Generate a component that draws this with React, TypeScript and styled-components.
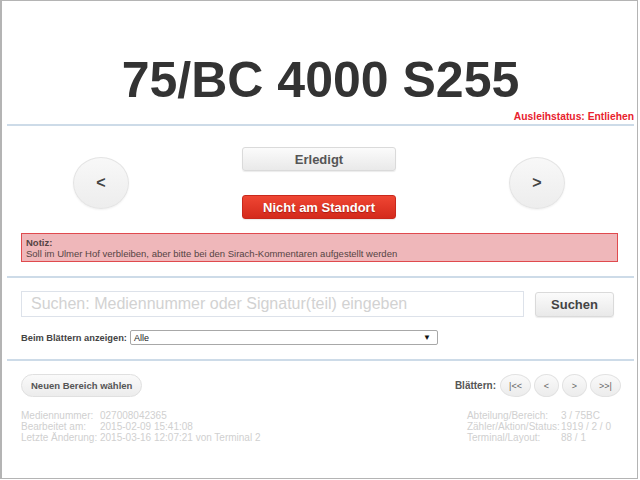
import styled, { createGlobalStyle } from "styled-components";

const GlobalStyle = createGlobalStyle`
  html, body {
    margin: 0;
    padding: 0;
    background: #ffffff;
  }
  body {
    font-family: "Liberation Sans", Arial, sans-serif;
    color: #333;
  }
`;

const Frame = styled.div`
  box-sizing: border-box;
  width: 638px;
  height: 479px;
  border: 1px solid #b4b4b4;
  border-left-width: 2px;
  padding: 0 3px 0 5px;
  overflow: hidden;
`;

const Title = styled.h1`
  margin: 54px 0 0;
  font-size: 50px;
  line-height: 50px;
  font-weight: bold;
  text-align: center;
  color: #333;
`;

const Status = styled.div`
  margin-top: 5px;
  text-align: right;
  font-size: 10.3px;
  line-height: 13px;
  font-weight: bold;
  color: #e8222e;
`;

const Rule = styled.hr<{ $gap: number }>`
  margin: ${(p) => p.$gap}px 0 0;
  border: 0;
  height: 2px;
  background: #cddbe8;
`;

const Section = styled.div<{ $right?: number }>`
  padding: 0 ${(p) => p.$right ?? 16}px 0 13px;
`;

const ActionRow = styled.div`
  margin-top: 21px;
  display: flex;
  align-items: center;
  justify-content: center;
  gap: 113px;
`;

const RoundNav = styled.button`
  width: 56px;
  height: 52px;
  border-radius: 50%;
  border: 1px solid #e4e4e4;
  background: linear-gradient(#f8f8f8, #ededed);
  box-shadow: 0 1px 2px rgba(0, 0, 0, 0.06);
  font-family: "Liberation Sans", Arial, sans-serif;
  font-size: 16px;
  font-weight: bold;
  color: #444;
  padding: 0;
`;

const ActionColumn = styled.div`
  display: flex;
  flex-direction: column;
  gap: 24px;
`;

const Button = styled.button<{ $danger?: boolean }>`
  width: 154px;
  height: 24px;
  border-radius: 3px;
  font-family: "Liberation Sans", Arial, sans-serif;
  font-size: 13px;
  font-weight: bold;
  padding: 0;
  border: 1px solid ${(p) => (p.$danger ? "#c8281c" : "#dadada")};
  background: ${(p) =>
    p.$danger
      ? "linear-gradient(#ef4633, #d42a1c)"
      : "linear-gradient(#fbfbfb, #e9e9e9)"};
  color: ${(p) => (p.$danger ? "#fff" : "#555")};
  text-shadow: ${(p) => (p.$danger ? "0 1px 1px rgba(120,0,0,0.5)" : "none")};
  box-shadow: 0 1px 1px rgba(0, 0, 0, 0.08);
`;

const Note = styled.div`
  margin-top: 14px;
  margin-left: 1px;
  box-sizing: border-box;
  height: 29px;
  padding: 3px 4px;
  background: #efb7ba;
  border: 1px solid #e04a4e;
  font-size: 9.5px;
  line-height: 11px;
  color: #554444;
`;

const NoteLabel = styled.div`
  font-weight: bold;
`;

const SearchRow = styled.div`
  margin-top: 13px;
  display: flex;
  align-items: center;
  gap: 11px;
  padding-left: 1px;
`;

const SearchInput = styled.input`
  box-sizing: border-box;
  width: 503px;
  height: 26px;
  border: 1px solid #dde2ea;
  padding: 0 9px;
  font-family: "Liberation Sans", Arial, sans-serif;
  font-size: 16px;
  color: #333;
  outline: none;
  &::placeholder {
    color: #d2d2d2;
  }
`;

const SearchButton = styled(Button)`
  width: 79px;
  height: 25px;
  font-size: 13px;
  color: #444;
`;

const FilterRow = styled.div`
  margin-top: 13px;
  padding-left: 1px;
  display: flex;
  align-items: center;
  gap: 3px;
  font-size: 9.3px;
  font-weight: bold;
  color: #444;
`;

const SelectBox = styled.div`
  box-sizing: border-box;
  width: 308px;
  height: 15px;
  border: 1px solid #a8a8a8;
  border-radius: 2px;
  padding: 0 6px 0 3px;
  display: flex;
  align-items: center;
  justify-content: space-between;
  font-weight: normal;
  color: #222;
  font-size: 9px;
`;

const Arrow = styled.span`
  font-size: 8px;
  color: #111;
`;

const FooterRow = styled.div`
  margin-top: 13px;
  padding-left: 1px;
  display: flex;
  justify-content: space-between;
  align-items: center;
`;

const PillButton = styled.button`
  height: 23px;
  padding: 0 9px;
  border-radius: 12px;
  border: 1px solid #e0e0e0;
  background: linear-gradient(#fafafa, #ececec);
  font-family: "Liberation Sans", Arial, sans-serif;
  font-size: 9.5px;
  font-weight: bold;
  color: #555;
`;

const Pager = styled.div`
  display: flex;
  align-items: center;
  gap: 3px;
  font-size: 10px;
  font-weight: bold;
  color: #555;
`;

const PagerLabel = styled.span`
  margin-right: 1px;
`;

const PageButton = styled.button<{ $wide?: boolean }>`
  width: ${(p) => (p.$wide ? 31 : 25)}px;
  height: 23px;
  padding: 0;
  border-radius: 50%;
  border: 1px solid #e2e2e2;
  background: linear-gradient(#fafafa, #ececec);
  font-family: "Liberation Sans", Arial, sans-serif;
  font-size: 9px;
  color: #666;
`;

const MetaRow = styled.div`
  margin-top: 13px;
  padding-left: 1px;
  display: flex;
  justify-content: space-between;
`;

const MetaTable = styled.div<{ $label: number }>`
  display: grid;
  grid-template-columns: ${(p) => p.$label}px auto;
  font-size: 10px;
  line-height: 11px;
  color: #d0d0d0;
  white-space: nowrap;
`;

const RightMeta = styled(MetaTable)`
  margin-right: 10px;
`;

export default function App() {
  return (
    <>
      <GlobalStyle />
      <Frame>
        <Title>75/BC 4000 S255</Title>
        <Status>Ausleihstatus: Entliehen</Status>
        <Rule $gap={1} />
        <Section>
          <ActionRow>
            <RoundNav>&lt;</RoundNav>
            <ActionColumn>
              <Button>Erledigt</Button>
              <Button $danger>Nicht am Standort</Button>
            </ActionColumn>
            <RoundNav>&gt;</RoundNav>
          </ActionRow>
          <Note>
            <NoteLabel>Notiz:</NoteLabel>
            Soll im Ulmer Hof verbleiben, aber bitte bei den Sirach-Kommentaren
            aufgestellt werden
          </Note>
        </Section>
        <Rule $gap={14} />
        <Section>
          <SearchRow>
            <SearchInput placeholder="Suchen: Mediennummer oder Signatur(teil) eingeben" />
            <SearchButton>Suchen</SearchButton>
          </SearchRow>
          <FilterRow>
            Beim Blättern anzeigen:
            <SelectBox>
              <span>Alle</span>
              <Arrow>▼</Arrow>
            </SelectBox>
          </FilterRow>
        </Section>
        <Rule $gap={14} />
        <Section $right={13}>
          <FooterRow>
            <PillButton>Neuen Bereich wählen</PillButton>
            <Pager>
              <PagerLabel>Blättern:</PagerLabel>
              <PageButton $wide>|&lt;&lt;</PageButton>
              <PageButton>&lt;</PageButton>
              <PageButton>&gt;</PageButton>
              <PageButton $wide>&gt;&gt;|</PageButton>
            </Pager>
          </FooterRow>
          <MetaRow>
            <MetaTable $label={79}>
              <span>Mediennummer:</span>
              <span>027008042365</span>
              <span>Bearbeitet am:</span>
              <span>2015-02-09 15:41:08</span>
              <span>Letzte Änderung:</span>
              <span>2015-03-16 12:07:21 von Terminal 2</span>
            </MetaTable>
            <RightMeta $label={94}>
              <span>Abteilung/Bereich:</span>
              <span>3 / 75BC</span>
              <span>Zähler/Aktion/Status:</span>
              <span>1919 / 2 / 0</span>
              <span>Terminal/Layout:</span>
              <span>88 / 1</span>
            </RightMeta>
          </MetaRow>
        </Section>
      </Frame>
    </>
  );
}
